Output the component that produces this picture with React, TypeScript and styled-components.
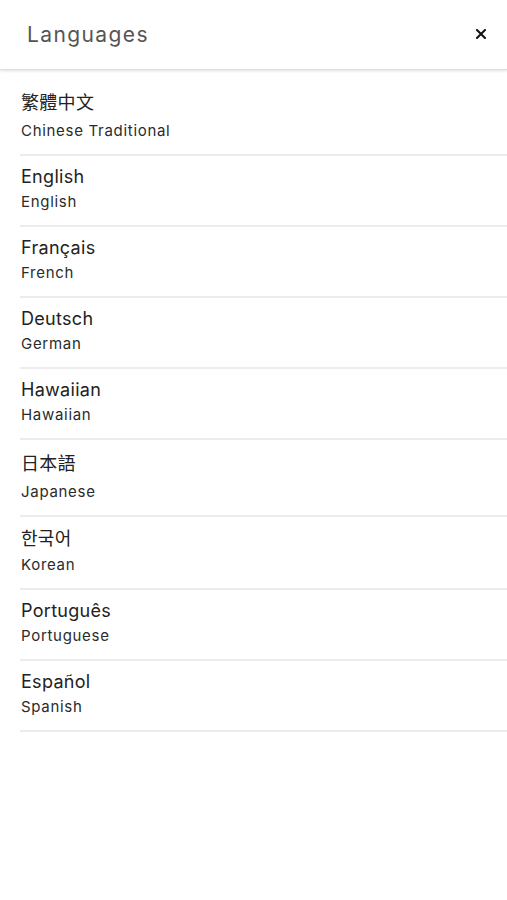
import React from "react";
import styled, { createGlobalStyle } from "styled-components";

const Global = createGlobalStyle`
  html, body { margin: 0; padding: 0; background: #fff; }
  body { font-family: Inter, "Noto Sans CJK TC", "Noto Sans CJK JP", "Noto Sans CJK KR", sans-serif; -webkit-font-smoothing: antialiased; }
`;

const Page = styled.div`
  width: 507px;
  min-height: 900px;
  background: #fff;
`;

const Header = styled.header`
  height: 70px;
  display: flex;
  align-items: center;
  justify-content: space-between;
  padding: 0 20px 0 27px;
  box-sizing: border-box;
  border-bottom: 1px solid #dedede;
  box-shadow: 0 1px 3px rgba(0, 0, 0, 0.12);
  position: relative;
`;

const Title = styled.h1`
  margin: 0;
  font-size: 21px;
  line-height: 26px;
  font-weight: 400;
  letter-spacing: 1.4px;
  color: #555;
`;

const Close = styled.button`
  border: 0;
  background: none;
  padding: 0;
  margin-top: -2px;
  width: 12px;
  height: 12px;
  display: flex;
  align-items: center;
  justify-content: center;
  cursor: pointer;
`;

const List = styled.ul`
  list-style: none;
  margin: 0;
  padding: 9px 0 0 20px;
`;

const Row = styled.li`
  border-bottom: 2px solid #ececec;
  padding: 8px 0 12px 1px;
  display: flex;
  flex-direction: column;
`;

const Native = styled.span<{ $lh: number }>`
  font-size: 18px;
  line-height: ${(p) => p.$lh}px;
  letter-spacing: 0.3px;
  color: #222;
`;

const Sub = styled.span`
  font-size: 15px;
  line-height: 23px;
  letter-spacing: 0.7px;
  color: #2b2b2b;
`;

const langs: { native: string; en: string; lh: number }[] = [
  { native: "繁體中文", en: "Chinese Traditional", lh: 32 },
  { native: "English", en: "English", lh: 26 },
  { native: "Français", en: "French", lh: 26 },
  { native: "Deutsch", en: "German", lh: 26 },
  { native: "Hawaiian", en: "Hawaiian", lh: 26 },
  { native: "日本語", en: "Japanese", lh: 32 },
  { native: "한국어", en: "Korean", lh: 28 },
  { native: "Português", en: "Portuguese", lh: 26 },
  { native: "Español", en: "Spanish", lh: 26 },
];

export default function App() {
  return (
    <Page>
      <Global />
      <Header>
        <Title>Languages</Title>
        <Close aria-label="Close">
          <svg width="10" height="10" viewBox="0 0 10 10">
            <path d="M1 1L9 9M9 1L1 9" stroke="#111" strokeWidth="2" strokeLinecap="square" />
          </svg>
        </Close>
      </Header>
      <List>
        {langs.map((l) => (
          <Row key={l.en}>
            <Native $lh={l.lh}>{l.native}</Native>
            <Sub>{l.en}</Sub>
          </Row>
        ))}
      </List>
    </Page>
  );
}
